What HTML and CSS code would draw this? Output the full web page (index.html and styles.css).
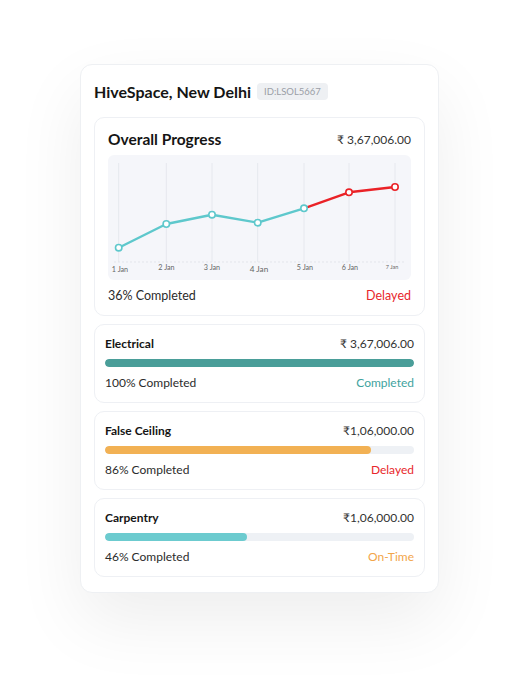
FILE: index.html
```html
<!DOCTYPE html>
<html lang="en">
<head>
  <meta charset="UTF-8" />
  <meta name="viewport" content="width=device-width, initial-scale=1" />
  <title>HiveSpace Progress</title>
  <link rel="stylesheet" href="styles.css">
</head>
<body>

  <div class="panel">
    <div class="panel-head">
      <h1>HiveSpace, New Delhi</h1>
      <span class="badge">ID:LSOL5667</span>
    </div>

    <div class="card overall">
      <div class="row">
        <h2>Overall Progress</h2>
        <span class="amount">₹ 3,67,006.00</span>
      </div>
      <div class="chart">
        <svg width="304" height="125" viewBox="0 0 304 125">
          <!-- linhas verticais -->
          <g stroke="#e6e8ee" stroke-width="1">
            <line x1="10.7" y1="8" x2="10.7" y2="107" />
            <line x1="58.3" y1="8" x2="58.3" y2="107" />
            <line x1="104" y1="8" x2="104" y2="107" />
            <line x1="149.7" y1="8" x2="149.7" y2="107" />
            <line x1="196" y1="8" x2="196" y2="107" />
            <line x1="241" y1="8" x2="241" y2="107" />
            <line x1="287" y1="8" x2="287" y2="107" />
          </g>
          <line x1="6" y1="107" x2="296" y2="107" stroke="#e3e5eb" stroke-width="1" stroke-dasharray="2 2" />
          <polyline points="10.7,92.7 58.3,69 104,59.7 149.7,67.7 196,53.3" fill="none" stroke="#5ec8cc" stroke-width="2.4" stroke-linejoin="round" />
          <polyline points="196,53.3 241,37.3 287,32" fill="none" stroke="#ea2227" stroke-width="2.4" stroke-linejoin="round" />
          <g fill="#fff" stroke-width="1.6">
            <circle cx="10.7" cy="92.7" r="3.2" stroke="#5ec8cc" />
            <circle cx="58.3" cy="69" r="3.2" stroke="#5ec8cc" />
            <circle cx="104" cy="59.7" r="3.2" stroke="#5ec8cc" />
            <circle cx="149.7" cy="67.7" r="3.2" stroke="#5ec8cc" />
            <circle cx="196" cy="53.3" r="3.2" stroke="#5ec8cc" />
            <circle cx="241" cy="37.3" r="3.2" stroke="#ea2227" />
            <circle cx="287" cy="32" r="3.2" stroke="#ea2227" />
          </g>
          <g class="tick" text-anchor="middle">
            <text x="12" y="117">1 Jan</text>
            <text x="58.5" y="115">2 Jan</text>
            <text x="104" y="115">3 Jan</text>
            <text x="151" y="117" class="tick-lg">4 Jan</text>
            <text x="197" y="115">5 Jan</text>
            <text x="242" y="115">6 Jan</text>
            <text x="284" y="114" class="tick-sm">7 Jan</text>
          </g>
        </svg>
      </div>
      <div class="row foot">
        <span>36% Completed</span>
        <span class="status delayed">Delayed</span>
      </div>
    </div>

    <div class="card task">
      <div class="row">
        <h3>Electrical</h3>
        <span class="amount">₹ 3,67,006.00</span>
      </div>
      <div class="track"><div class="fill fill-done" style="width: 100%"></div></div>
      <div class="row foot">
        <span>100% Completed</span>
        <span class="status done">Completed</span>
      </div>
    </div>

    <div class="card task">
      <div class="row">
        <h3>False Ceiling</h3>
        <span class="amount">₹1,06,000.00</span>
      </div>
      <div class="track"><div class="fill fill-late" style="width: 86%"></div></div>
      <div class="row foot">
        <span>86% Completed</span>
        <span class="status delayed">Delayed</span>
      </div>
    </div>

    <div class="card task">
      <div class="row">
        <h3>Carpentry</h3>
        <span class="amount">₹1,06,000.00</span>
      </div>
      <div class="track"><div class="fill fill-ok" style="width: 46%"></div></div>
      <div class="row foot">
        <span>46% Completed</span>
        <span class="status ontime">On-Time</span>
      </div>
    </div>
  </div>

</body>
</html>
```

FILE: styles.css
```css
body {
  margin: 0;
  min-height: 690px;
  padding-top: 64px;
  box-sizing: border-box;
  background: #fff;
  font-family: "Lato", "Liberation Sans", sans-serif;
  color: #2b2b2b;
}
.panel {
  box-sizing: border-box;
  width: 359px;
  margin-left: 80px;
  padding: 13px 13px 15px;
  background: #fff;
  border: 1px solid #eef0f3;
  border-radius: 12px;
  box-shadow: 0 28px 70px rgba(0, 0, 0, 0.07);
  display: flex;
  flex-direction: column;
  gap: 8px;
}
.panel-head {
  display: flex;
  align-items: center;
  gap: 6px;
  height: 26px;
  margin-bottom: 5px;
}
h1 {
  margin: 0;
  font-size: 16px;
  font-weight: 700;
  color: #151515;
}
.badge {
  background: #eef0f3;
  color: #9a9ea6;
  font-size: 9.5px;
  padding: 3px 7px;
  border-radius: 4px;
}
.card {
  border: 1px solid #eef0f4;
  border-radius: 10px;
  background: #fff;
}
.row {
  display: flex;
  justify-content: space-between;
  align-items: center;
}
.overall {
  padding: 12px 13px 12px;
}
.overall .row {
  height: 18px;
}
h2 {
  margin: 0;
  font-size: 15.5px;
  font-weight: 700;
  color: #151515;
}
.amount {
  font-size: 12px;
  color: #333;
}
.chart {
  margin-top: 7px;
  height: 125px;
  background: #f5f6fa;
  border-radius: 6px;
}
.chart svg {
  display: block;
}
.tick {
  font-size: 7.2px;
  fill: #666;
}
.tick-lg {
  font-size: 8.2px;
}
.tick-sm {
  font-size: 5.5px;
}
.overall .foot {
  margin-top: 7px;
  height: 16px;
  font-size: 12.5px;
}
.task {
  padding: 10px 10px 12px;
}
.task .row {
  height: 16px;
}
h3 {
  margin: 0;
  font-size: 12px;
  font-weight: 700;
  color: #151515;
}
.track {
  margin-top: 8px;
  height: 8px;
  background: #eef1f5;
  border-radius: 4px;
  overflow: hidden;
}
.fill {
  height: 100%;
  border-radius: 4px;
}
.fill-done {
  background: #4a9e99;
}
.fill-late {
  background: #f2b154;
}
.fill-ok {
  background: #6ccbcf;
}
.task .foot {
  margin-top: 7px;
  font-size: 12px;
}
.status.delayed {
  color: #e8262b;
}
.status.done {
  color: #3ea39e;
}
.status.ontime {
  color: #f2a54a;
}
```
